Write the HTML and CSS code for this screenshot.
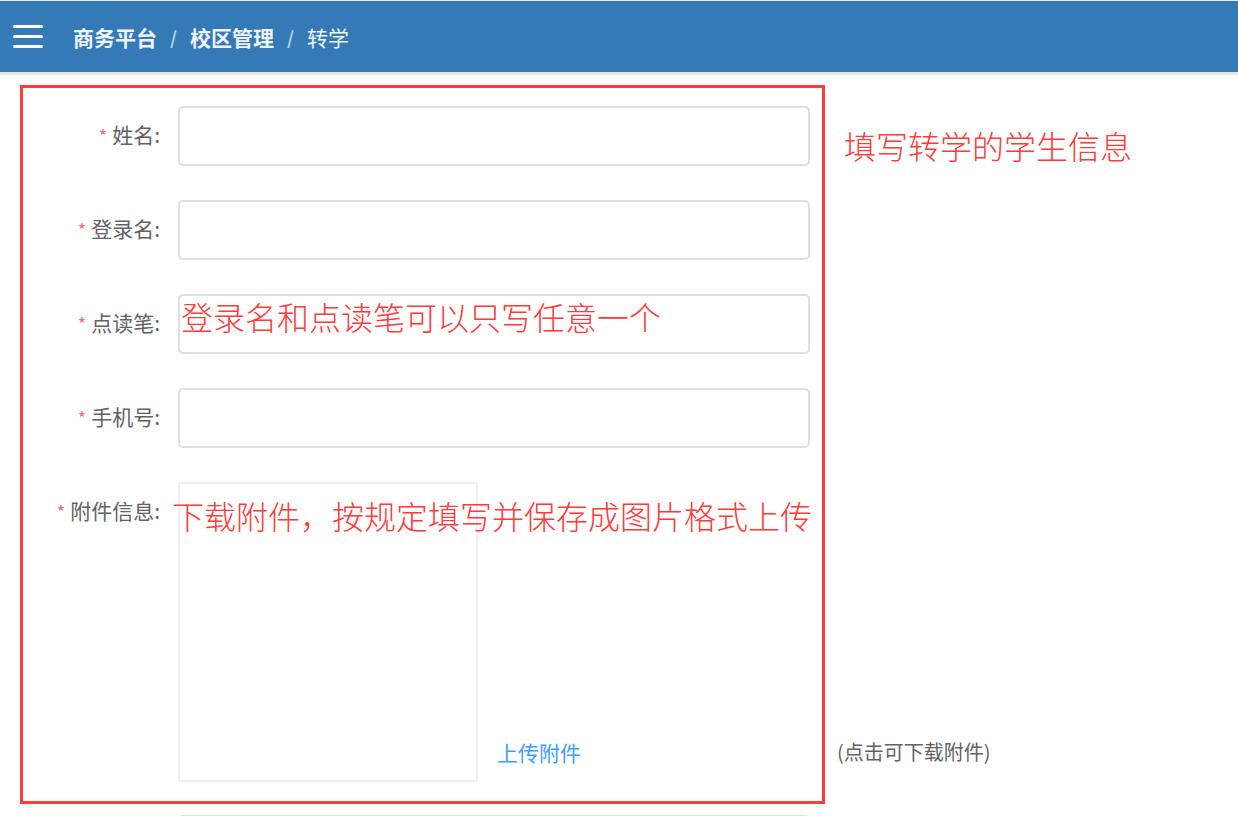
FILE: index.html
```html
<!DOCTYPE html>
<html lang="zh-CN">
  <head>
    <meta charset="UTF-8" />
    <meta name="viewport" content="width=device-width, initial-scale=1.0" />
    <title>转学</title>
    <link rel="stylesheet" href="styles.css">
  </head>
  <body>
    <div class="header">
      <div class="menu-btn">
        <span></span><span></span><span></span>
      </div>
      <div class="breadcrumb">
        <span class="crumb strong">商务平台</span>
        <span class="sep">/</span>
        <span class="crumb strong">校区管理</span>
        <span class="sep">/</span>
        <span class="crumb">转学</span>
      </div>
    </div>

    <div class="page">
      <form class="form">
        <div class="form-item">
          <label class="label"><i>*</i>姓名:</label>
          <input class="input" type="text" />
        </div>
        <div class="form-item">
          <label class="label"><i>*</i>登录名:</label>
          <input class="input" type="text" />
        </div>
        <div class="form-item">
          <label class="label"><i>*</i>点读笔:</label>
          <input class="input" type="text" />
        </div>
        <div class="form-item">
          <label class="label"><i>*</i>手机号:</label>
          <input class="input" type="text" />
        </div>
        <div class="form-item attach-item">
          <label class="label"><i>*</i>附件信息:</label>
          <div class="attach">
            <div class="attach-box"></div>
            <a class="upload" href="#">上传附件</a>
            <span class="hint">(点击可下载附件)</span>
          </div>
        </div>
        <div class="form-item">
          <label class="label"></label>
          <input class="input" type="text" />
        </div>
      </form>

      <!-- annotations -->
      <div class="mark-box"></div>
      <div class="note note-1">填写转学的学生信息</div>
      <div class="note note-2">登录名和点读笔可以只写任意一个</div>
      <div class="note note-3">下载附件，按规定填写并保存成图片格式上传</div>
    </div>
  </body>
</html>
```

FILE: styles.css
```css
html,
body {
  margin: 0;
  padding: 0;
  background: #fff;
  font-family: "Noto Sans CJK SC", "Liberation Sans", sans-serif;
  overflow: hidden;
}
.header {
  height: 71px;
  border-top: 1px solid #e8eef5;
  border-bottom: 3px solid #e4e4e4;
  background: #347ab6;
  display: flex;
  align-items: center;
  padding-left: 13px;
}
.menu-btn {
  width: 30px;
  display: flex;
  flex-direction: column;
  gap: 7px;
  margin-right: 30px;
}
.menu-btn span {
  display: block;
  height: 3px;
  background: #fff;
  border-radius: 2px;
}
.breadcrumb {
  display: flex;
  align-items: center;
  font-size: 21px;
  color: #fff;
  gap: 13px;
}
.crumb.strong {
  font-weight: bold;
}
.crumb {
  color: #eef3f9;
}
.sep {
  color: #b8cde3;
  font-size: 18px;
  font-weight: bold;
}
.page {
  position: relative;
}
.form {
  padding-top: 31px;
}
.form-item {
  display: flex;
  align-items: flex-start;
  margin-bottom: 34px;
}
.attach-item {
  margin-bottom: 33px;
}
.label {
  width: 160px;
  height: 60px;
  flex: none;
  text-align: right;
  font-size: 21px;
  line-height: 57px;
  color: #606266;
  margin-right: 18px;
  overflow: hidden;
}
.label i {
  font-style: normal;
  color: #f56c6c;
  font-size: 18px;
  margin-right: 5px;
}
.input {
  box-sizing: border-box;
  width: 632px;
  height: 60px;
  border: 2px solid #dcdfe6;
  border-radius: 5px;
  background: #fff;
  margin: 0;
  outline: none;
}
.attach {
  display: flex;
  align-items: flex-end;
}
.attach-box {
  box-sizing: border-box;
  width: 300px;
  height: 300px;
  border: 2px solid #ebeef5;
}
.upload {
  color: #409eff;
  font-size: 21px;
  text-decoration: none;
  margin-left: 19px;
  line-height: 30px;
  padding-bottom: 15px;
}
.hint {
  color: #606266;
  font-size: 20px;
  margin-left: 256px;
  line-height: 30px;
  padding-bottom: 15px;
  white-space: nowrap;
}
.mark-box {
  position: absolute;
  left: 20px;
  top: 10px;
  width: 799px;
  height: 713px;
  border: 3px solid #ff3b3b;
}
.note {
  position: absolute;
  color: #ff3b3b;
  font-size: 32px;
  line-height: 32px;
  font-weight: 300;
  white-space: nowrap;
}
.note-1 {
  left: 844px;
  top: 54px;
}
.note-2 {
  left: 181px;
  top: 225px;
}
.note-3 {
  left: 172px;
  top: 424px;
}
```
